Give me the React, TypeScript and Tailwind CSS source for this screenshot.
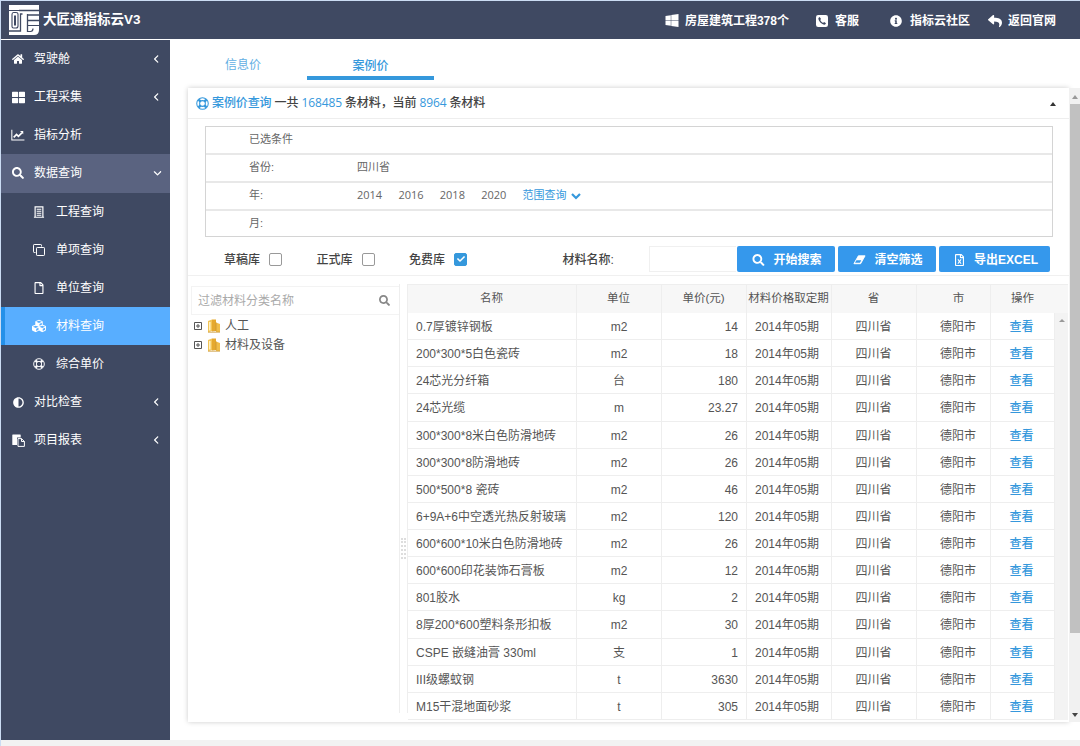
import type { ReactNode } from "react";
import type { IconType } from "react-icons";
import {
  FaAdjust,
  FaCheck,
  FaCubes,
  FaHome,
  FaInfoCircle,
  FaRegFile,
  FaRegFileExcel,
  FaReply,
  FaSearch,
  FaThLarge,
} from "react-icons/fa";
import { FaAngleDown, FaAngleLeft } from "react-icons/fa6";
import clsx from "clsx";

type IconProps = { className?: string };
type IconLike = IconType | ((props: IconProps) => ReactNode);

function TrendIcon({ className }: IconProps) {
  return (
    <svg viewBox="0 0 16 14" className={className} fill="none" stroke="currentColor">
      <path d="M.8 1v11.8H15.5" strokeWidth="1.2" />
      <path d="M3 9.8 6.3 6.4l2.2 2.1 4-4" strokeWidth="2" />
      <path d="M10.3 2.4h3.8v3.8z" fill="currentColor" stroke="none" />
    </svg>
  );
}

function LedgerIcon({ className }: IconProps) {
  return (
    <svg viewBox="0 0 12 13" className={className} fill="none" stroke="currentColor">
      <path d="M1.8 12V1h8.4v11" strokeWidth="1.3" />
      <path d="M3.5 3.5h5M3.5 5.7h5M3.5 7.9h5M3.5 10.1h5M.5 12.2h11" strokeWidth="1.1" />
    </svg>
  );
}

function CloneIcon({ className }: IconProps) {
  return (
    <svg viewBox="0 0 12 12" className={className} fill="none" stroke="currentColor">
      <path d="M2.5 8.5H1.2a.7.7 0 0 1-.7-.7V1.2a.7.7 0 0 1 .7-.7h6.6a.7.7 0 0 1 .7.7v1.3" />
      <rect x="3.5" y="3.5" width="8" height="8" rx=".7" />
    </svg>
  );
}

function PasteIcon({ className }: IconProps) {
  return (
    <svg viewBox="0 0 13 13" className={className} fill="currentColor">
      <path d="M.8.5h7.4a.5.5 0 0 1 .5.5v2.5H5V11H.8a.5.5 0 0 1-.5-.5V1a.5.5 0 0 1 .5-.5z" />
      <path d="M6 4.600h3.500l2.900 2.900v4.900H6zM9.500 4.600v2.900h2.900" fill="none" stroke="currentColor" />
    </svg>
  );
}

function RingIcon({ className }: IconProps) {
  return (
    <svg viewBox="0 0 14 14" className={className} fill="none" stroke="currentColor">
      <circle cx="7" cy="7" r="6.2" strokeWidth="1.1" />
      <circle cx="7" cy="7" r="3.1" strokeWidth="1.1" />
      <path d="m2.900 2.900 2 2M11.100 2.900l-2 2M2.900 11.100l2-2M11.100 11.100l-2-2" strokeWidth="2.800" />
    </svg>
  );
}

function WindowsIcon({ className }: IconProps) {
  return (
    <svg viewBox="0 0 14 14" className={className} fill="currentColor">
      <path d="M0 2.100 5.700 1.300v5.400H0zM6.200 1.200 14 .1v6.600H6.200zM0 7.200h5.700v5.500L0 11.900zM6.200 7.200H14v6.700l-7.800-1.100z" />
    </svg>
  );
}

function PhoneIcon({ className }: IconProps) {
  return (
    <svg viewBox="0 0 12 12" className={className}>
      <rect width="12" height="12" rx="2.2" fill="currentColor" />
      <path
        d="M3.700 2 2.400 2.900C2 5.800 6.200 10 9.100 9.600L10 8.300 8.100 7 7 7.900C5.900 7.300 4.700 6.100 4.200 5L5 3.900z"
        fill="#3f4962"
      />
    </svg>
  );
}

function EraserIcon({ className }: IconProps) {
  return (
    <svg viewBox="0 0 14 12" className={className} fill="none" stroke="currentColor" strokeLinejoin="round">
      <path d="M5.800 1.500h7.200L8.200 10H1z" fill="currentColor" strokeWidth="1" />
      <path d="M3.700 6.300h5.200L7.500 9H2.200z" fill="#3598ec" stroke="none" />
    </svg>
  );
}

function CheckDownIcon({ className }: IconProps) {
  return (
    <svg viewBox="0 0 10 8" className={className} fill="none" stroke="currentColor" strokeWidth="2.2">
      <path d="M1 2 5 6l4-4" />
    </svg>
  );
}

function Logo() {
  return (
    <svg viewBox="0 0 30 30" className="h-[30px] w-[30px]">
      <path d="M0 0h30v25q0 5-5 5H0z" fill="#fff" />
      <g fill="none" stroke="#3f4962">
        <path d="M0 5.500h10M3 9.500v12q0 1.500 1.500 1.500H7q2 0 2-2V9q0-1.500-2-1.500H4.500Q3 7.500 3 9.500" strokeWidth="1.1" />
        <path d="M6 10.500v10" strokeWidth="2" />
        <path d="M0 26h11.500V9h2M10 5.500h20M18.500 9v18" strokeWidth="1.3" />
        <path d="M19 10h11M19 15.500h11" strokeWidth="1.6" />
        <path d="M18.500 20.500H30M18.500 26.500h3q2.500 0 2.500-3" strokeWidth="1.2" />
      </g>
    </svg>
  );
}

function BookIcon() {
  return (
    <svg viewBox="0 0 14 14" className="h-[14px] w-[14px]">
      <path d="M1 2 5 .5V12l-4 1.2z" fill="#f3c557" />
      <path d="M5 .5h4V12l-4 .5z" fill="#e5a92f" />
      <path d="M9 3.500 13 5v8H9z" fill="#f0bd49" />
      <path d="M2.800 3v8.500" stroke="#fff0c0" strokeWidth="1.6" />
      <path d="M9 3.500V12M1 13.200h12" stroke="#c99634" strokeWidth=".8" />
    </svg>
  );
}

type MenuItem = {
  label: string;
  Icon: IconLike;
  size?: string;
  arrow?: "left" | "down";
  child?: boolean;
  active?: boolean;
};

const MENU: MenuItem[] = [
  { label: "驾驶舱", Icon: FaHome, arrow: "left" },
  { label: "工程采集", Icon: FaThLarge, size: "h-[13px] w-[13px]", arrow: "left" },
  { label: "指标分析", Icon: TrendIcon, size: "h-[12px] w-[14px]" },
  { label: "数据查询", Icon: FaSearch, arrow: "down" },
  { label: "工程查询", Icon: LedgerIcon, child: true },
  { label: "单项查询", Icon: CloneIcon, child: true },
  { label: "单位查询", Icon: FaRegFile, child: true },
  { label: "材料查询", Icon: FaCubes, size: "h-[14px] w-[16px]", child: true, active: true },
  { label: "综合单价", Icon: RingIcon, child: true },
  { label: "对比检查", Icon: FaAdjust, size: "h-[11px] w-[11px]", arrow: "left" },
  { label: "项目报表", Icon: PasteIcon, size: "h-[13px] w-[13px]", arrow: "left" },
];

const ROWS: [string, string, string][] = [
  ["0.7厚镀锌钢板", "m2", "14"],
  ["200*300*5白色瓷砖", "m2", "18"],
  ["24芯光分纤箱", "台", "180"],
  ["24芯光缆", "m", "23.27"],
  ["300*300*8米白色防滑地砖", "m2", "26"],
  ["300*300*8防滑地砖", "m2", "26"],
  ["500*500*8 瓷砖", "m2", "46"],
  ["6+9A+6中空透光热反射玻璃", "m2", "120"],
  ["600*600*10米白色防滑地砖", "m2", "26"],
  ["600*600印花装饰石膏板", "m2", "12"],
  ["801胶水", "kg", "2"],
  ["8厚200*600塑料条形扣板", "m2", "30"],
  ["CSPE 嵌缝油膏 330ml", "支", "1"],
  ["III级螺蚊钢", "t", "3630"],
  ["M15干混地面砂浆", "t", "305"],
];

const COLUMNS = ["名称", "单位", "单价(元)", "材料价格取定期", "省", "市", "操作"];
const GRID = "grid grid-cols-[169px_85px_85px_85px_85px_74px_64px]";

function Header() {
  return (
    <header className="flex h-[38px] shrink-0 items-center bg-[#3f4962] pl-2 text-white">
      <Logo />
      <h1 className="ml-1 text-[13.5px] font-bold">大匠通指标云V3</h1>
      <nav className="ml-auto flex items-center pt-[1px] pr-[24px] text-xs font-bold">
        <span className="mr-[27px] flex items-center">
          <WindowsIcon className="mr-[6px] h-[13px] w-[14px]" />
          房屋建筑工程378个
        </span>
        <span className="mr-[31px] flex items-center">
          <PhoneIcon className="mr-[7px] h-[12px] w-[12px]" />
          客服
        </span>
        <span className="mr-[18px] flex items-center">
          <FaInfoCircle className="mr-[8px] h-[12px] w-[12px]" />
          指标云社区
        </span>
        <span className="flex items-center">
          <FaReply className="mr-[6px] h-[14px] w-[14px]" />
          返回官网
        </span>
      </nav>
    </header>
  );
}

function Sidebar() {
  return (
    <aside className="w-[169px] shrink-0 bg-[#3f4962] text-xs text-white">
      {MENU.map(({ label, Icon, size, arrow, child, active }) => (
        <div
          key={label}
          className={clsx(
            "flex h-[38.15px] items-center border-l-4 pr-[9px]",
            child ? "pl-[26px]" : "pl-[5px]",
            active
              ? "border-[#2490e8] bg-[#58aeff]"
              : arrow === "down"
                ? "border-[#5a6380] bg-[#5a6380]"
                : "border-transparent",
          )}
        >
          <span className={clsx("flex w-4 justify-center", child ? "mr-[9px]" : "mr-[8px]")}>
            <Icon className={size ?? "h-[12px] w-[12px]"} />
          </span>
          <span>{label}</span>
          {arrow === "left" && <FaAngleLeft className="ml-auto h-[10px] w-[9px]" />}
          {arrow === "down" && <FaAngleDown className="-mr-[1px] ml-auto h-[10px] w-[9px]" />}
        </div>
      ))}
    </aside>
  );
}

function FilterRow({ label, children }: { label: string; children?: ReactNode }) {
  return (
    <div className="flex h-[28px] items-center border-b-2 border-[#e8e8e8] pb-[1px] pl-[43px] last:h-[27px] last:border-b-0 last:pb-[3px]">
      <span className="w-[108px]">{label}</span>
      {children}
    </div>
  );
}

function Conditions() {
  return (
    <div className="mt-[7px] mr-[16px] ml-[17px] h-[111px] border border-[#d4d4d4] text-[11px] text-[#666]">
      <FilterRow label="已选条件" />
      <FilterRow label="省份:">四川省</FilterRow>
      <FilterRow label="年:">
        <span className="flex w-[165.5px] font-['Open_Sans','Noto_Sans_CJK_SC',sans-serif]">
          {["2014", "2016", "2018", "2020"].map((year) => (
            <span key={year} className="w-[41.4px] shrink-0">
              {year}
            </span>
          ))}
        </span>
        <span className="flex items-center text-[#3598dc]">
          范围查询
          <CheckDownIcon className="mt-[1px] ml-[4px] h-[8px] w-[10px]" />
        </span>
      </FilterRow>
      <FilterRow label="月:" />
    </div>
  );
}

function LibraryCheck({ label, checked }: { label: string; checked?: boolean }) {
  return (
    <span className="flex w-[92.5px] items-center font-medium">
      <span className="pt-[1px]">{label}</span>
      <span
        className={clsx(
          "ml-[9px] flex h-[13px] w-[13px] items-center justify-center rounded-[2px] border",
          checked ? "border-[#3598dc] bg-[#3598dc]" : "border-[#999] bg-white",
        )}
      >
        {checked && <FaCheck className="h-[8px] w-[8px] text-white" />}
      </span>
    </span>
  );
}

function ActionButton({ Icon, className, children }: { Icon: IconLike; className: string; children: ReactNode }) {
  return (
    <button className={clsx("flex h-[26px] items-center justify-center rounded-[2px] bg-[#3598ec] pt-[1px] pl-[3px] font-bold text-white", className)}>
      <Icon className="mr-[8px] h-[12px] w-[13px]" />
      {children}
    </button>
  );
}

function Toolbar() {
  return (
    <div className="flex h-[39px] items-center border-b border-[#f0f0f0] pt-[6px] pl-[36px] text-xs text-[#444]">
      <LibraryCheck label="草稿库" />
      <LibraryCheck label="正式库" />
      <LibraryCheck label="免费库" checked />
      <span className="ml-[61px] w-[86px] pt-[1px] font-medium">材料名称:</span>
      <span className="h-[26px] w-[87px] border border-r-0 border-[#f0f0f0]" />
      <div className="ml-[1px] flex gap-[3px]">
        <ActionButton Icon={FaSearch} className="w-[98px]">开始搜索</ActionButton>
        <ActionButton Icon={EraserIcon} className="w-[98px]">清空筛选</ActionButton>
        <ActionButton Icon={FaRegFileExcel} className="w-[111px]">导出EXCEL</ActionButton>
      </div>
    </div>
  );
}

function TreeNode({ label }: { label: string }) {
  return (
    <div className="flex h-[19px] items-center">
      <svg viewBox="0 0 8 8" className="mr-[5px] h-[8px] w-[8px]">
        <path d="M.5.5h7v7h-7zM2 4h4M4 2v4" fill="none" stroke="#555" />
      </svg>
      <BookIcon />
      <span className="ml-[4px]">{label}</span>
    </div>
  );
}

function CategoryTree() {
  return (
    <div className="w-[212px] shrink-0 border-r border-[#eee] pl-[3px] text-xs text-[#555]">
      <div className="mt-[2px] mb-[1px] flex h-[29px] items-center justify-between border border-r-0 border-[#f3f3f3] pr-[9px] pl-[6px] text-[#aaa]">
        过滤材料分类名称
        <FaSearch className="h-[11px] w-[11px] text-[#888]" />
      </div>
      <div className="pl-[3px]">
        <TreeNode label="人工" />
        <TreeNode label="材料及设备" />
      </div>
    </div>
  );
}

function MaterialTable() {
  return (
    <div className="w-[661px] border-l border-[#eee] text-xs text-[#555]">
      <div className={clsx(GRID, "h-[29px] border-t border-[#eee] bg-[#f7f7f7] text-[11.5px]")}>
        {COLUMNS.map((name) => (
          <span
            key={name}
            className="flex items-center justify-center border-r border-[#eee] pr-[1px] pb-[1px] whitespace-nowrap last:border-r-0 nth-[6]:pl-[11px]"
          >
            {name}
          </span>
        ))}
      </div>
      <div className="flex">
        <div>
          {ROWS.map(([name, unit, price]) => (
            <div key={name} className={clsx(GRID, "h-[27.13px] border-b border-[#eee] *:flex *:items-center *:border-r *:border-[#eee] *:pt-[2px]")}>
              <span className="pl-[8px] whitespace-nowrap">{name}</span>
              <span className="justify-center">{unit}</span>
              <span className="justify-end pr-[8px]">{price}</span>
              <span className="justify-center pr-[4px] whitespace-nowrap">2014年05期</span>
              <span className="justify-center pr-[1px]">四川省</span>
              <span className="justify-center pl-[9px]">德阳市</span>
              <span className="justify-center pr-[2px] font-medium text-[#3598dc]">查看</span>
            </div>
          ))}
        </div>
        <div className="flex flex-1 justify-center bg-[#f3f3f3] pt-[6px]">
          <span className="h-0 border-x-[3px] border-b-[3px] border-x-transparent border-b-[#999]" />
        </div>
      </div>
    </div>
  );
}

export default function App() {
  return (
    <div className="flex h-[746px] w-[1080px] flex-col overflow-hidden border-t border-l border-[#cbdcf3] bg-white font-['Liberation_Sans','Noto_Sans_CJK_SC',sans-serif]">
      <Header />
      <div className="flex h-[701px] shrink-0 pt-[1px]">
        <Sidebar />
        <main className="flex flex-1 flex-col pl-[18px]">
          <div className="flex h-[48px] shrink-0 text-xs font-medium text-[#3598dc]">
            <span className="flex w-[110px] items-center justify-center pt-[1px] font-normal text-[#62afe3]">信息价</span>
            <span className="ml-[9px] flex h-[40px] w-[127px] items-center justify-center border-b-4 border-[#3598dc] pt-[15px]">
              案例价
            </span>
          </div>
          <div className="flex h-[634px]">
            <section className="w-[881px] shadow-[0_0_5px_#ccc]">
              <div className="flex h-[31px] items-center border-b border-[#eee] pr-[13px] pl-[8px] text-xs text-[#444]">
                <RingIcon className="mr-[3px] h-[13px] w-[13px] text-[#3598dc]" />
                <p className="font-['Open_Sans','Noto_Sans_CJK_SC',sans-serif] font-medium tracking-[-0.1px] whitespace-pre">
                  <span className="text-[#3598dc]">案例价查询</span> 一共{" "}
                  <span className="font-normal text-[#3598dc]">168485</span> 条材料，当前{" "}
                  <span className="font-normal text-[#3598dc]">8964</span> 条材料
                </p>
                <span className="mt-[2px] ml-auto border-x-[3px] border-b-4 border-x-transparent border-b-[#333]" />
              </div>
              <Conditions />
              <Toolbar />
              <div className="flex h-[437px] pt-[8px]">
                <CategoryTree />
                <div className="flex w-[7px] shrink-0 items-center justify-center pt-[100px]">
                  <span className="h-[21px] w-[5px] border-x-2 border-dotted border-[#ddd]" />
                </div>
                <MaterialTable />
              </div>
            </section>
            <div className="flex flex-1 flex-col items-center justify-between bg-[#f1f1f1] pt-[7px] pb-[5px]">
              <span className="border-x-[3px] border-b-4 border-x-transparent border-b-[#999]" />
              <span className="mt-[5px] mb-auto h-[529px] w-[10px] bg-[#c1c1c1]" />
              <span className="border-x-[3px] border-t-4 border-x-transparent border-t-[#444]" />
            </div>
          </div>
        </main>
      </div>
      <div className="flex-1 bg-[#f2f2f2]" />
    </div>
  );
}
